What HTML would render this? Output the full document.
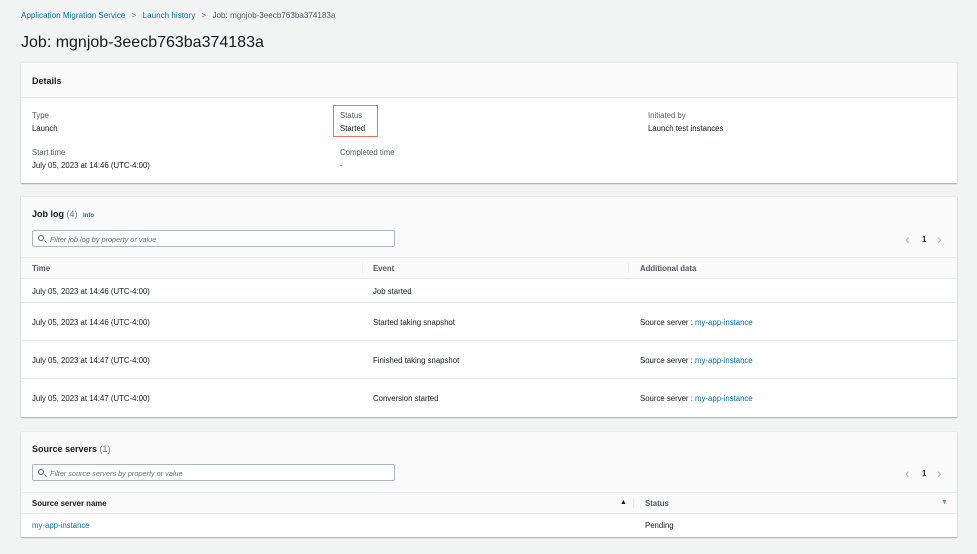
<!DOCTYPE html>
<html><head><meta charset="utf-8"><style>
*{box-sizing:border-box;margin:0;padding:0}
body{width:977px;height:554px;background:#f2f3f3;font-family:"Liberation Sans",sans-serif;color:#16191f;position:relative;overflow:hidden;font-size:7.8px}
.a{position:absolute;white-space:nowrap}
.card{position:absolute;left:21px;width:936px;background:#fff;box-shadow:0 1px 1px rgba(0,22,40,.3),0 0 0 1px #e9ebed}
.hd{background:#fafafa}
.lnk{color:#0073bb}
.lbl{color:#545b64}
.b{font-weight:bold}
.inp{position:absolute;border:1px solid #aab7b8;background:#fff;border-radius:2px;height:17px}
.inp span{position:absolute;left:17px;top:4px;font-style:italic;color:#687078;font-size:7.3px}
.inp i{position:absolute;left:5px;top:4px;width:6px;height:6px;border:1px solid #545b64;border-radius:50%}
.inp i:after{content:"";position:absolute;left:5px;top:5px;width:3px;height:1px;background:#545b64;transform:rotate(45deg)}
.line{position:absolute;left:0;right:0;height:1px;background:#eaeded}
.vd{position:absolute;width:1px;height:10px;background:#eaeded}
.pg{position:absolute;color:#aab7b8;font-size:14px;line-height:14px}
</style></head><body>
<div class="a" style="left:21px;top:11px;font-size:8.1px"><span class="lnk">Application Migration Service</span> <span style="color:#687078;margin:0 4px">&gt;</span> <span class="lnk">Launch history</span> <span style="color:#687078;margin:0 4px">&gt;</span> <span style="color:#545b64">Job: mgnjob-3eecb763ba374183a</span></div>
<div class="a" style="left:21px;top:34px;font-size:16px">Job: mgnjob-3eecb763ba374183a</div>

<div class="card" style="top:63px;height:120px">
<div class="hd" style="height:35px;border-bottom:1px solid #eaeded"></div>
<div class="a b" style="left:11px;top:13px;font-size:9px">Details</div>
<div class="a lbl" style="left:11px;top:48px">Type</div>
<div class="a" style="left:11px;top:61px">Launch</div>
<div class="a lbl" style="left:11px;top:85px">Start time</div>
<div class="a" style="left:11px;top:98px">July 05, 2023 at 14:46 (UTC-4:00)</div>
<div class="a" style="left:312px;top:42px;width:45px;height:32px;border:1.5px solid #e8735a"></div>
<div class="a lbl" style="left:319px;top:48px">Status</div>
<div class="a" style="left:319px;top:61px">Started</div>
<div class="a lbl" style="left:319px;top:85px">Completed time</div>
<div class="a" style="left:319px;top:98px">-</div>
<div class="a lbl" style="left:627px;top:48px">Initiated by</div>
<div class="a" style="left:627px;top:61px">Launch test instances</div>
</div>

<div class="card" style="top:197px;height:220px">
<div class="hd" style="height:82px;border-bottom:1px solid #eaeded"></div>
<div class="line" style="top:60px"></div>
<div class="a b" style="left:11px;top:12px;font-size:9px">Job log <span style="font-weight:normal;color:#687078">(4)</span> <span class="lnk" style="font-size:6px;margin-left:3px">Info</span></div>
<div class="inp" style="left:11px;top:33px;width:363px"><i></i><span>Filter job log by property or value</span></div>
<div class="pg" style="left:884px;top:35px">&lsaquo;</div><div class="a b" style="left:901px;top:38px">1</div><div class="pg" style="left:916px;top:35px">&rsaquo;</div>
<div class="a b" style="left:11px;top:67px;color:#545b64">Time</div>
<div class="vd" style="left:341px;top:66px"></div>
<div class="a b" style="left:352px;top:67px;color:#545b64">Event</div>
<div class="vd" style="left:607px;top:66px"></div>
<div class="a b" style="left:619px;top:67px;color:#545b64">Additional data</div>
<div class="a" style="left:11px;top:90px">July 05, 2023 at 14:46 (UTC-4:00)</div><div class="a" style="left:352px;top:90px">Job started</div>
<div class="line" style="top:105px"></div>
<div class="a" style="left:11px;top:121px">July 05, 2023 at 14:46 (UTC-4:00)</div><div class="a" style="left:352px;top:121px">Started taking snapshot</div><div class="a" style="left:619px;top:121px">Source server : <span class="lnk">my-app-instance</span></div>
<div class="line" style="top:143px"></div>
<div class="a" style="left:11px;top:159px">July 05, 2023 at 14:47 (UTC-4:00)</div><div class="a" style="left:352px;top:159px">Finished taking snapshot</div><div class="a" style="left:619px;top:159px">Source server : <span class="lnk">my-app-instance</span></div>
<div class="line" style="top:181px"></div>
<div class="a" style="left:11px;top:197px">July 05, 2023 at 14:47 (UTC-4:00)</div><div class="a" style="left:352px;top:197px">Conversion started</div><div class="a" style="left:619px;top:197px">Source server : <span class="lnk">my-app-instance</span></div>
</div>

<div class="card" style="top:432px;height:105px">
<div class="hd" style="height:82px;border-bottom:1px solid #eaeded"></div>
<div class="line" style="top:60px"></div>
<div class="a b" style="left:11px;top:12px;font-size:9px">Source servers <span style="font-weight:normal;color:#687078">(1)</span></div>
<div class="inp" style="left:11px;top:32px;width:363px"><i></i><span>Filter source servers by property or value</span></div>
<div class="pg" style="left:884px;top:34px">&lsaquo;</div><div class="a b" style="left:901px;top:37px">1</div><div class="pg" style="left:916px;top:34px">&rsaquo;</div>
<div class="a b" style="left:11px;top:67px">Source server name</div>
<div class="a" style="left:599px;top:67px;font-size:7px">&#9650;</div>
<div class="vd" style="left:612px;top:66px"></div>
<div class="a b" style="left:624px;top:67px;color:#545b64">Status</div>
<div class="a" style="left:920px;top:67px;font-size:7px;color:#879596">&#9660;</div>
<div class="a lnk" style="left:11px;top:89px">my-app-instance</div>
<div class="a" style="left:624px;top:89px">Pending</div>
</div>
</body></html>
